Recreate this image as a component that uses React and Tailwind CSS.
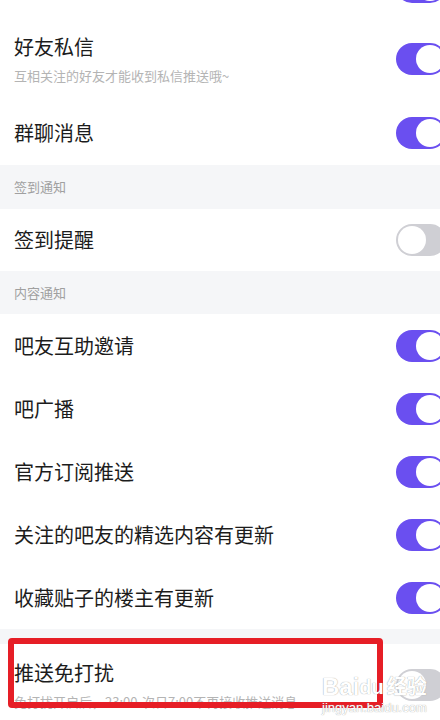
const font = { fontFamily: '"Noto Sans CJK SC", "Noto Sans", sans-serif' };

function Toggle({ on }) {
  return (
    <div
      className={
        "relative h-[32px] w-[50px] shrink-0 rounded-full " +
        (on ? "bg-[#6a4ff0]" : "bg-[#cfcfd4]")
      }
    >
      <div
        className={
          "absolute top-[2px] h-[28px] w-[28px] rounded-full bg-white " +
          (on ? "right-[2px]" : "left-[2px]")
        }
      />
    </div>
  );
}

function Row({ title, sub, on, h }) {
  return (
    <div className={"flex items-center justify-between bg-white pl-[14px] " + h}>
      <div className="flex flex-col">
        <div className="text-[20px] leading-[28px] text-[#1c1c1c]">{title}</div>
        {sub && <div className="mt-[6px] text-[13px] leading-[18px] text-[#b4b4b4]">{sub}</div>}
      </div>
      <div className="mr-[-6px]">
        <Toggle on={on} />
      </div>
    </div>
  );
}

function Header({ label, h }) {
  return (
    <div className={"flex items-center bg-[#f5f6f8] pl-[14px] text-[13px] text-[#a0a0a0] " + h}>
      {label}
    </div>
  );
}

export default function App() {
  return (
    <div className="relative h-[720px] w-[440px] overflow-hidden bg-white" style={font}>
      <div className="mt-[-44px] flex flex-col">
        <Row title="" on h="h-[62px]" />
        <Row title="好友私信" sub="互相关注的好友才能收到私信推送哦~" on h="h-[82px]" />
        <Row title="群聊消息" on h="h-[65px]" />
        <Header label="签到通知" h="h-[44px]" />
        <Row title="签到提醒" on={false} h="h-[62px]" />
        <Header label="内容通知" h="h-[43px]" />
        <Row title="吧友互助邀请" on h="h-[63px]" />
        <Row title="吧广播" on h="h-[63px]" />
        <Row title="官方订阅推送" on h="h-[63px]" />
        <Row title="关注的吧友的精选内容有更新" on h="h-[63px]" />
        <Row title="收藏贴子的楼主有更新" on h="h-[63px]" />
        <div className="h-[15px] bg-[#f5f6f8]" />
        <Row
          title="推送免打扰"
          sub="免打扰开启后，23:00-次日7:00不再接收推送消息"
          on={false}
          h="h-[82px]"
        />
      </div>

      {/* annotation box */}
      <div className="absolute left-[8px] top-[638px] h-[70px] w-[375px] rounded-[4px] border-[6px] border-[#e61e26]" />

      {/* watermark */}
      <div
        className="absolute left-[322px] top-[674px] flex flex-col text-white"
        style={{ fontFamily: '"Liberation Sans", "Noto Sans CJK SC", sans-serif', textShadow: "0 0 1px #8a8a8a" }}
      >
        <div className="flex items-end text-[24px] font-bold leading-[26px]">
          <span>Bai</span>
          <span className="text-[20px]">du</span>
          <span className="ml-[3px] text-[20px]">经验</span>
        </div>
        <div className="text-[13px] leading-[15px]">jingyan.baidu.com</div>
      </div>
    </div>
  );
}
